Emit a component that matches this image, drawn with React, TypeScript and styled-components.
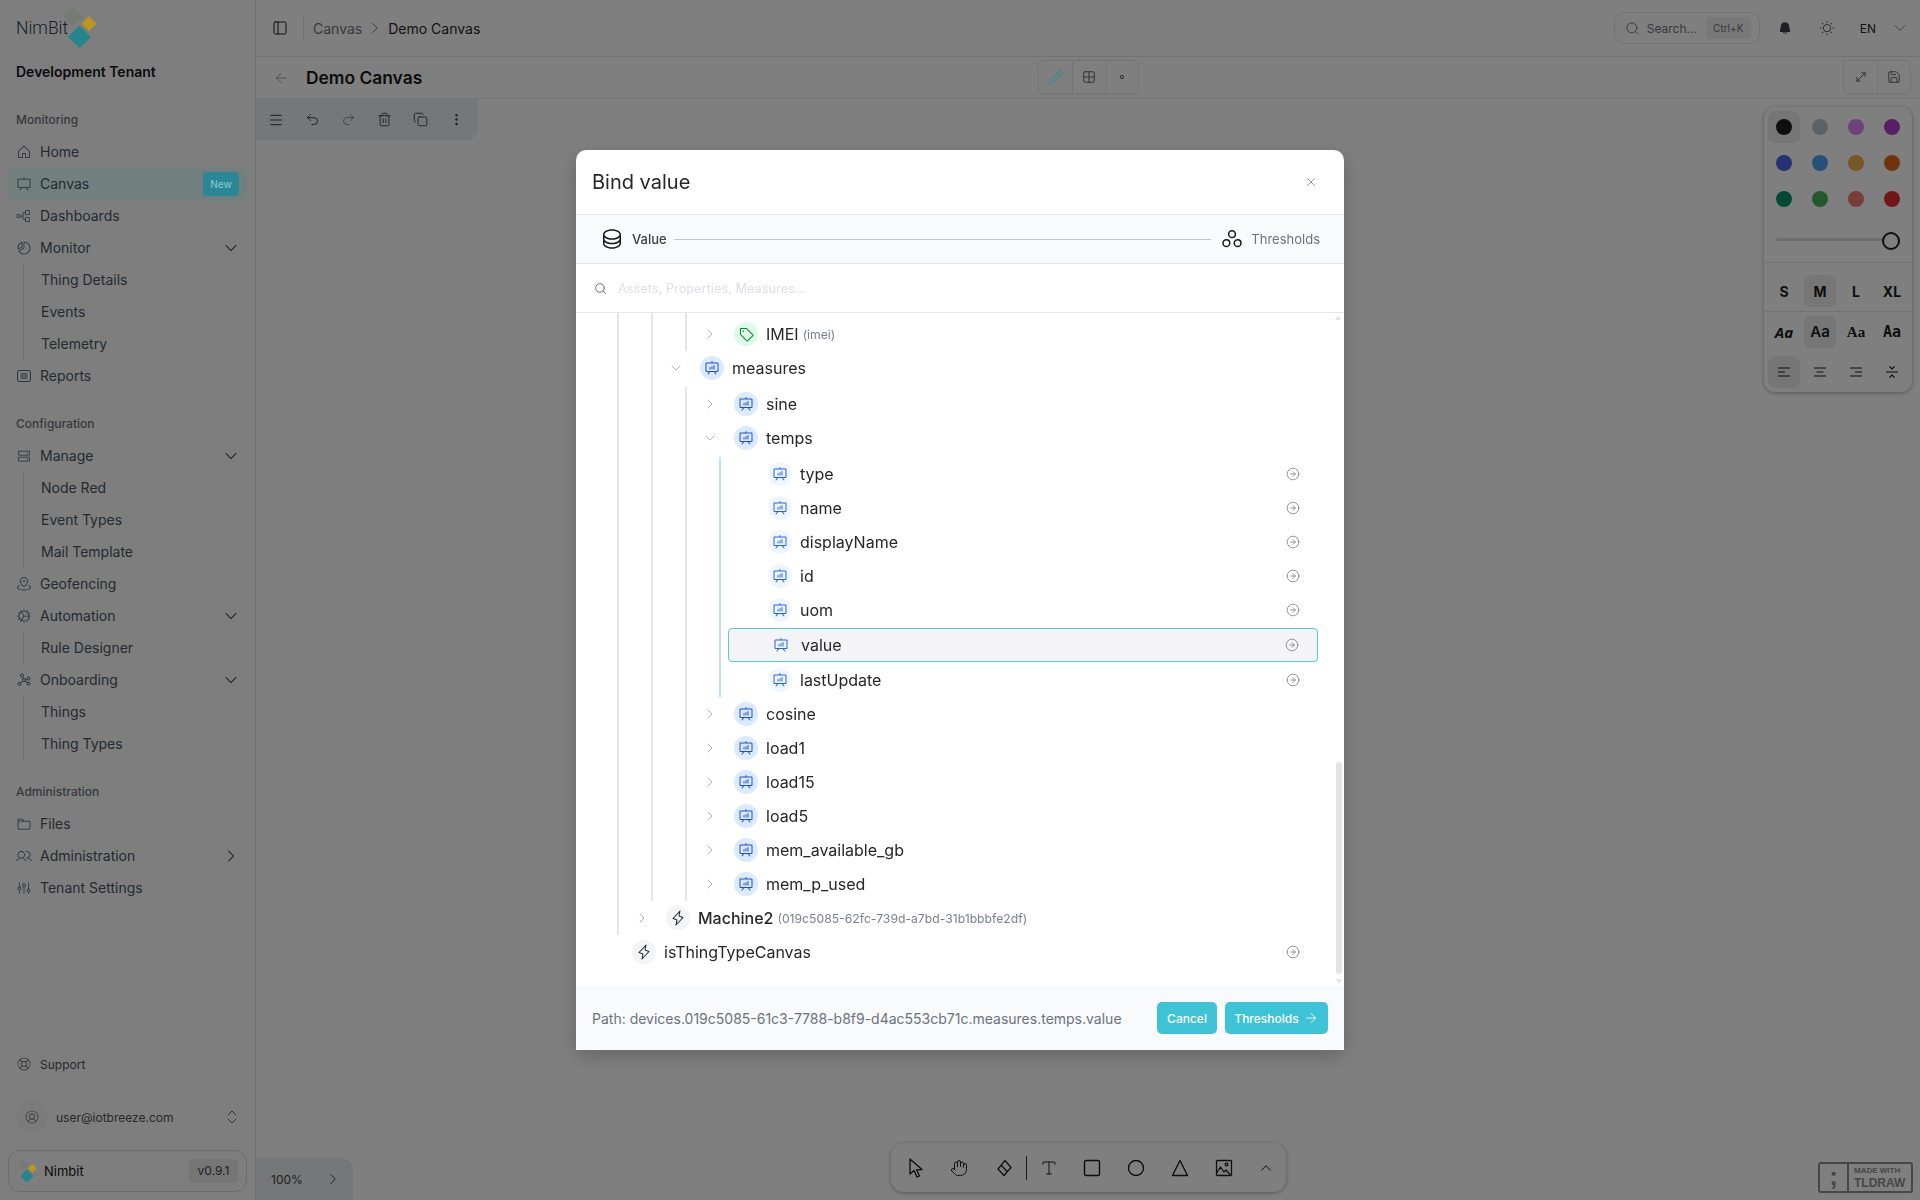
import React from "react";
import styled, { createGlobalStyle } from "styled-components";
import {
  ArrowLeft, ArrowRight, ChevronDown, ChevronRight, ChevronUp, ChevronsUpDown, CircleArrowRight,
  Copy, Grid2x2, Hand, Menu, MoveDiagonal, PanelLeft, Pencil, Redo2, Save, Search, Trash2, Type, Undo2, X, EllipsisVertical,
} from "lucide-react";
import {
  PiHouseLight, PiPresentationLight, PiTreeStructureLight, PiChartPieSliceLight, PiHardDrivesLight,
  PiMapPinAreaLight, PiGearFineLight, PiGraphLight, PiFolderLight, PiUsersLight, PiSlidersLight,
  PiLifebuoyLight, PiUserCircleLight, PiBellFill, PiSunLight, PiDatabase, PiCirclesThree,
  PiPresentationChart, PiTag, PiLightning,
} from "react-icons/pi";

const Global = createGlobalStyle`
  html, body { margin: 0; padding: 0; background: #fff; }
  * { box-sizing: border-box; }
  body { font-family: Inter, "Liberation Sans", sans-serif; color: #18181b; overflow: hidden; }
`;

const Shell = styled.div`display: grid; grid-template-columns: 256px 1fr; width: 1920px; height: 1200px;`;

/* Sidebar */
const Sidebar = styled.aside`display: flex; flex-direction: column; height: 1200px; background: #fcfcfc; border-right: 1px solid #e4e4e7; padding-bottom: 8px;`;
const Logo = styled.div`display: flex; align-items: flex-start; height: 56px; padding: 8px 0 0 16px;`;
const LogoText = styled.span`width: 48px; font: 300 17.500px/40px Roboto, sans-serif; color: #2c3e55;`;
const Tenant = styled.div`height: 32px; padding-left: 16px; font-size: 14px; line-height: 32px; font-weight: 600; color: #18181b;`;
const NavGroup = styled.nav`display: flex; flex-direction: column; margin-top: 16px; padding: 0 8px;`;
const NavLabel = styled.div`height: 32px; padding-left: 8px; font-size: 12px; line-height: 32px; font-weight: 500; color: #71717a;`;
const NavRow = styled.div<{ $active?: boolean }>`
  display: flex; align-items: center; gap: 8px; height: 32px; padding: 0 8px; border-radius: 8px;
  font-size: 14px; line-height: 16px; color: #4b5563; background: ${p => (p.$active ? "#e2ffff" : "transparent")};
  svg { flex: none; }
`;
const NavText = styled.span`flex: 1; padding-bottom: 1px;`;
const NavCaret = styled.span`display: flex; margin-right: -2px; color: #27272a;`;
const NewBadge = styled.span`position: relative; z-index: 1; width: 36px; height: 24px; border-radius: 4px; background: #2a8796; color: #7cc4ce; font-size: 10px; font-weight: 500; line-height: 24px; text-align: center;`;
const SubNav = styled.div`display: flex; flex-direction: column; margin-left: 15px; border-left: 1px solid #e4e4e7;`;
const SubRow = styled.div`height: 32px; padding-left: 17px; font-size: 14px; line-height: 32px; color: #4b5563;`;
const Support = styled.div`display: flex; align-items: center; gap: 8px; margin-top: auto; height: 32px; padding: 0 16px; font-size: 12px; line-height: 15px; color: #52525b;`;
const UserRow = styled.div`display: flex; align-items: center; gap: 8px; height: 32px; margin-top: 21px; padding: 0 14px 0 16px; font-size: 12px; color: #52525b;`;
const UserEmail = styled.span`flex: 1;`;
const Avatar = styled.span`display: flex; align-items: center; justify-content: center; width: 32px; height: 32px; border-radius: 50%; background: #f7f7f8; color: #71717a;`;
const Card = styled.div`display: flex; align-items: center; height: 42px; margin: 17px 8px 0; padding: 0 8px 0 9px; border: 1px solid #d8d8dc; border-radius: 12px;`;
const CardName = styled.span`flex: 1; margin-left: 7px; font-size: 13px; color: #18181b;`;
const Version = styled.span`display: block; width: 49px; height: 24px; border-radius: 4px; background: #ededee; font-size: 12px; line-height: 24px; text-align: center; color: #3f3f46;`;
const MarkSvg = styled.svg`position: relative; z-index: 1; flex: none;`;

/* Main */
const Main = styled.main`display: flex; flex-direction: column; min-width: 0;`;
const TopBar = styled.header`display: flex; align-items: center; height: 57px; padding: 0 10px 0 16px; border-bottom: 1px solid #e4e4e7;`;
const Divider = styled.span`width: 1px; height: 24px; margin: 0 9px 0 15px; background: #e4e4e7;`;
const Crumb = styled.span<{ $muted?: boolean }>`font-size: 14px; color: ${p => (p.$muted ? "#71717a" : "#27272a")};`;
const TopRight = styled.div`display: flex; align-items: center; margin-left: auto;`;
const SearchBox = styled.div`display: flex; align-items: center; width: 146px; height: 32px; padding: 0 8px 0 10px; border: 1px solid #e4e4e7; border-radius: 10px; font-size: 12px; color: #71717a;`;
const SearchText = styled.span`margin-left: 7px; flex: 1;`;
const Kbd = styled.span`display: block; width: 45px; height: 22px; border-radius: 5px; background: #f1f1f3; font-size: 10px; line-height: 22px; text-align: center; color: #71717a;`;
const TopIcon = styled.span<{ $w: number }>`display: flex; justify-content: center; width: ${p => p.$w}px; color: #3f3f46;`;
const CrumbSep = styled(TopIcon)`color: #71717a;`;
const Lang = styled.span`margin: 0 14px 0 16px; font-size: 12px; color: #27272a;`;

const SubBar = styled.div`display: grid; grid-template-columns: 1fr auto 1fr; align-items: center; height: 42px; padding: 0 9px; border-bottom: 1px solid #e8e8ea;`;
const TitleWrap = styled.div`display: flex; align-items: center; gap: 17px; padding-left: 8px; color: #a1a1aa;`;
const PageTitle = styled.h1`margin: 0; font-size: 17.400px; font-weight: 600; color: #18181b;`;
const Segments = styled.div`display: flex; justify-self: center; height: 34px; margin-top: -1px; border: 1px solid #e8e8ea; border-radius: 6px; box-shadow: 0 1px 2px #0000000f;`;
const SegmentsRight = styled(Segments)`justify-self: end;`;
const Segment = styled.span`
  display: flex; align-items: center; justify-content: center; width: 33px; color: #52525b;
  & + & { border-left: 1px solid #e8e8ea; }
`;
const AccentPencil = styled(Pencil)`position: relative; z-index: 1; color: #2b8a99;`;

const Canvas = styled.div`position: relative; flex: 1; overflow: hidden;`;
const TopTools = styled.div`position: absolute; left: 0; top: 0; display: flex; width: 222px; height: 41px; padding-left: 2px; background: #edeef1; border-bottom-right-radius: 12px;`;
const ToolBtn = styled.span<{ $off?: boolean }>`display: flex; align-items: center; justify-content: center; width: 36px; color: ${p => (p.$off ? "#8a8a92" : "#3f3f46")};`;
const StylePanel = styled.div`position: absolute; right: 8px; top: 8px; display: flex; flex-direction: column; width: 148px; height: 285px; padding: 4px 0; background: #fff; border-radius: 11px; box-shadow: 0 1px 4px #00000055;`;
const CellGrid = styled.div`display: grid; grid-template-columns: repeat(4, 32px); gap: 4px; padding: 0 4px;`;
const Cell = styled.span<{ $on?: boolean }>`display: flex; align-items: center; justify-content: center; height: 32px; border-radius: 7px; background: ${p => (p.$on ? "#ececec" : "transparent")}; color: #1d1d1d;`;
const Dot = styled.i<{ $c: string }>`display: block; width: 16px; height: 16px; border-radius: 50%; background: ${p => p.$c};`;
const SliderRow = styled.div`position: relative; display: flex; align-items: center; height: 48px; padding: 2px 16px 0 12px; border-bottom: 1px solid #e6e6e6;`;
const SliderTrack = styled.div`flex: 1; height: 3px; border-radius: 2px; background: #dcdcdc;`;
const SliderKnob = styled.span`position: absolute; right: 12px; top: 17px; width: 18px; height: 18px; border-radius: 50%; border: 2.500px solid #1d1d1d; background: #fff;`;
const SizeGrid = styled(CellGrid)`padding-top: 12px; padding-bottom: 4px; border-bottom: 1px solid #e6e6e6;`;
const FontGrid = styled(CellGrid)`padding-top: 4px; padding-bottom: 8px;`;
const SizeText = styled.span`font-size: 14px; font-weight: 700;`;
const FontText = styled.span<{ $f: string; $i?: boolean; $w?: number }>`font: ${p => (p.$i ? "italic " : "")}${p => p.$w ?? 600} 15px/20px ${p => p.$f};`;

const BottomTools = styled.div`position: absolute; left: 635px; bottom: 8px; display: flex; align-items: center; width: 395px; height: 49px; padding: 0 0 0 2px; background: #fff; border-radius: 13px; box-shadow: 0 1px 4px #00000055;`;
const Tool = styled.span<{ $w?: number }>`display: flex; align-items: center; justify-content: center; flex: none; width: ${p => p.$w ?? 44}px; color: #1d1d1d;`;
const ToolSep = styled.span`flex: none; width: 1px; height: 24px; background: #333;`;
const ZoomBox = styled.div`position: absolute; left: 0; bottom: 0; display: flex; align-items: center; justify-content: space-between; width: 97px; height: 42px; padding: 0 11px 0 15px; background: #edeef1; border-top-right-radius: 12px; font-size: 12px; color: #3f3f46;`;
const Mark = styled.div`position: absolute; right: 7px; bottom: 7px; display: flex; width: 95px; height: 31px; border: 2px solid #8e8e8e; border-radius: 3px; color: #8e8e8e;`;
const MarkSemi = styled.span`flex: none; width: 29px; border-right: 2px solid #8e8e8e; font: 700 26px/24px "Liberation Sans", sans-serif; text-align: center;`;
const MarkText = styled.span`display: flex; flex-direction: column; padding: 2px 0 0 5px; font-weight: 700; font-family: "Liberation Sans", sans-serif;`;
const MarkSmall = styled.span`font-size: 8px; line-height: 10px; white-space: nowrap;`;
const MarkBig = styled.span`font-size: 12px; line-height: 14px;`;

/* Dialog */
const Overlay = styled.div`position: fixed; inset: 0; display: flex; align-items: center; justify-content: center; background: rgba(0, 0, 0, 0.5);`;
const Dialog = styled.section`position: relative; z-index: 2; display: flex; flex-direction: column; width: 768px; height: 900px; background: #fff; border-radius: 10px 10px 0 0; box-shadow: 0 6px 20px #00000033; overflow: hidden;`;
const DialogHead = styled.div`display: flex; align-items: center; justify-content: space-between; flex: none; height: 65px; padding: 0 26px 0 16px; border-bottom: 1px solid #e5e7eb; color: #71717a;`;
const DialogTitle = styled.h2`margin: 0; font-size: 20px; font-weight: 400; color: #27272a;`;
const Stepper = styled.div`display: flex; align-items: center; flex: none; height: 49px; padding: 0 24px; background: #f9fafb; border-bottom: 1px solid #e5e7eb; font-size: 13px; color: #18181b;`;
const StepText = styled.span<{ $muted?: boolean }>`font-weight: ${p => (p.$muted ? 400 : 500)}; color: ${p => (p.$muted ? "#71717a" : "#3f3f46")}; margin-left: ${p => (p.$muted ? 7 : 8)}px;`;
const StepLine = styled.span`flex: 1; height: 1px; margin: 0 9px 0 7px; background: #c4c4cc;`;
const SearchRow = styled.div`display: flex; align-items: center; gap: 11px; flex: none; height: 49px; padding-left: 18px; border-bottom: 1px solid #e5e7eb; color: #52525b; font-size: 12.800px;`;
const Placeholder = styled.span`color: #dcdfe4;`;
const Tree = styled.div`flex: 1; min-height: 0; padding: 0 26px 0 16px; overflow: hidden;`;
const Group = styled.div<{ $blue?: boolean; $top?: number; $pad?: number }>`
  margin: ${p => p.$top ?? 0}px 0 0 25px; padding: ${p => p.$pad ?? 0}px 0 0 7px;
  border-left: 2px solid ${p => (p.$blue ? "#bfdbfe" : "#e4e4ec")};
`;
const Row = styled.div<{ $sel?: boolean }>`
  display: flex; align-items: center; height: 34px; padding: 0 18px 0 8px;
  ${p => p.$sel && "margin: 1px 0; background: #f3f4f6; border: 1px solid #58c9da; border-radius: 4px;"}
`;
const Caret = styled.span`display: flex; justify-content: center; flex: none; width: 16px; margin-right: 16px; color: #9ca3af;`;
const IconDot = styled.span<{ $bg: string; $fg: string }>`display: flex; align-items: center; justify-content: center; flex: none; width: 24px; height: 24px; margin-right: 8px; border-radius: 50%; background: ${p => p.$bg}; color: ${p => p.$fg};`;
const RowName = styled.span<{ $med?: boolean }>`font-size: 16px; font-weight: ${p => (p.$med ? 500 : 400)}; color: #27272a;`;
const RowHint = styled.span`margin-left: 4px; font-size: 12.200px; color: #7b8090;`;
const RowGo = styled.span`display: flex; margin-left: auto; color: #71717a;`;
const ScrollUp = styled.i`position: absolute; right: 3px; top: 165px; width: 0; height: 0; border: 3.500px solid transparent; border-top: 0; border-bottom: 5px solid #e4e4e7;`;
const ScrollDown = styled.i`position: absolute; right: 2px; top: 829px; width: 0; height: 0; border: 3.500px solid transparent; border-bottom: 0; border-top: 5px solid #e4e4e7;`;
const ScrollThumb = styled.i`position: absolute; right: 2px; top: 612px; width: 6px; height: 212px; border-radius: 3px; background: #e4e4e7;`;
const DialogFoot = styled.footer`display: flex; align-items: center; flex: none; height: 64px; padding: 0 16px; background: #f9fafb;`;
const PathText = styled.span`flex: 1; font-size: 14px; color: #6b7280;`;
const Button = styled.button<{ $w: number }>`display: flex; align-items: center; justify-content: center; gap: 4px; width: ${p => p.$w}px; height: 32px; margin-left: 8px; padding: 0; border: 0; border-radius: 5px; background: #3ec2d6; color: #fff; font: 500 12px Inter, sans-serif;`;

const LogoMark = ({ w, h }: { w: number; h: number }) => (
  <MarkSvg width={w} height={h} viewBox="0 0 33 40">
    <polygon points="9.500,0 19,9 9.500,18.500 0,9" fill="#757a75" />
    <polygon points="25,8 32.500,15.500 25,23 17.500,15.500" fill="#be961e" />
    <polygon points="15.500,17.500 27,29 15.500,40 4,29" fill="#24858c" />
  </MarkSvg>
);

const ReportsIcon = () => (
  <svg width="16" height="16" viewBox="0 0 16 16" fill="none" stroke="currentColor" strokeWidth=".9">
    <rect x="1.500" y="2.500" width="13" height="11" rx="1.500" />
    <rect x="4.500" y="5" width="7" height="6" fill="currentColor" stroke="none" opacity=".45" />
  </svg>
);

const Down = () => <NavCaret><ChevronDown size={20} strokeWidth={1.25} /></NavCaret>;

const nav1 = (
  <>
    <NavLabel>Monitoring</NavLabel>
    <NavRow><PiHouseLight size={16} /><NavText>Home</NavText></NavRow>
    <NavRow $active><PiPresentationLight size={16} /><NavText>Canvas</NavText><NewBadge>New</NewBadge></NavRow>
    <NavRow><PiTreeStructureLight size={16} /><NavText>Dashboards</NavText></NavRow>
    <NavRow><PiChartPieSliceLight size={16} /><NavText>Monitor</NavText><Down /></NavRow>
    <SubNav><SubRow>Thing Details</SubRow><SubRow>Events</SubRow><SubRow>Telemetry</SubRow></SubNav>
    <NavRow><ReportsIcon /><NavText>Reports</NavText></NavRow>
  </>
);
const nav2 = (
  <>
    <NavLabel>Configuration</NavLabel>
    <NavRow><PiHardDrivesLight size={16} /><NavText>Manage</NavText><Down /></NavRow>
    <SubNav><SubRow>Node Red</SubRow><SubRow>Event Types</SubRow><SubRow>Mail Template</SubRow></SubNav>
    <NavRow><PiMapPinAreaLight size={16} /><NavText>Geofencing</NavText></NavRow>
    <NavRow><PiGearFineLight size={16} /><NavText>Automation</NavText><Down /></NavRow>
    <SubNav><SubRow>Rule Designer</SubRow></SubNav>
    <NavRow><PiGraphLight size={16} /><NavText>Onboarding</NavText><Down /></NavRow>
    <SubNav><SubRow>Things</SubRow><SubRow>Thing Types</SubRow></SubNav>
  </>
);
const nav3 = (
  <>
    <NavLabel>Administration</NavLabel>
    <NavRow><PiFolderLight size={16} /><NavText>Files</NavText></NavRow>
    <NavRow><PiUsersLight size={16} /><NavText>Administration</NavText><NavCaret><ChevronRight size={20} strokeWidth={1.25} /></NavCaret></NavRow>
    <NavRow><PiSlidersLight size={16} /><NavText>Tenant Settings</NavText></NavRow>
  </>
);

const swatches = ["#1d1d1d", "#b9c2cb", "#e085f4", "#ae3ec9", "#4465e9", "#4ba1f1", "#f1ac4b", "#e16919", "#099268", "#4cb05e", "#f87777", "#e03131"];

const AlignIcon = ({ d }: { d: string }) => (
  <svg width="16" height="16" viewBox="0 0 16 16" fill="none" stroke="currentColor" strokeWidth="1.1"><path d={d} /></svg>
);

type Kind = "measure" | "field" | "tag" | "zap";
const kinds: Record<Kind, { bg: string; fg: string; icon: React.ReactNode }> = {
  measure: { bg: "#dbeafe", fg: "#1d4ed8", icon: <PiPresentationChart size={16} /> },
  field: { bg: "#eff6ff", fg: "#2563eb", icon: <PiPresentationChart size={16} /> },
  tag: { bg: "#dcfce7", fg: "#15803d", icon: <PiTag size={16} /> },
  zap: { bg: "#f3f4f6", fg: "#1f2937", icon: <PiLightning size={16} /> },
};

const TreeRow = ({ name, kind, caret, hint, go, sel, med }: { name: string; kind: Kind; caret?: "r" | "d"; hint?: string; go?: boolean; sel?: boolean; med?: boolean }) => (
  <Row $sel={sel}>
    <Caret>
      {caret === "r" && <ChevronRight size={18} strokeWidth={1.25} />}
      {caret === "d" && <ChevronDown size={18} strokeWidth={1.25} />}
    </Caret>
    <IconDot $bg={sel ? "#f3f4f6" : kinds[kind].bg} $fg={kinds[kind].fg}>{kinds[kind].icon}</IconDot>
    <RowName $med={med}>{name}</RowName>
    {hint && <RowHint>{hint}</RowHint>}
    {go && <RowGo><CircleArrowRight size={14} strokeWidth={1.25} /></RowGo>}
  </Row>
);

export default function App() {
  return (
    <>
      <Global />
      <Shell>
        <Sidebar>
          <Logo><LogoText>NimBit</LogoText><LogoMark w={33} h={40} /></Logo>
          <Tenant>Development Tenant</Tenant>
          <NavGroup>{nav1}</NavGroup>
          <NavGroup>{nav2}</NavGroup>
          <NavGroup>{nav3}</NavGroup>
          <Support><PiLifebuoyLight size={16} />Support</Support>
          <UserRow>
            <Avatar><PiUserCircleLight size={16} /></Avatar>
            <UserEmail>user@iotbreeze.com</UserEmail>
            <ChevronsUpDown size={18} strokeWidth={1.25} />
          </UserRow>
          <Card>
            <LogoMark w={19} h={24} />
            <CardName>Nimbit</CardName>
            <Version>v0.9.1</Version>
          </Card>
        </Sidebar>
        <Main>
          <TopBar>
            <PanelLeft size={16} strokeWidth={1.5} />
            <Divider />
            <Crumb $muted>Canvas</Crumb>
            <CrumbSep $w={26}><ChevronRight size={18} strokeWidth={1.25} /></CrumbSep>
            <Crumb>Demo Canvas</Crumb>
            <TopRight>
              <SearchBox>
                <Search size={15} strokeWidth={1.5} />
                <SearchText>Search...</SearchText>
                <Kbd>Ctrl+K</Kbd>
              </SearchBox>
              <TopIcon $w={50}><PiBellFill size={14} /></TopIcon>
              <TopIcon $w={34}><PiSunLight size={16} /></TopIcon>
              <Lang>EN</Lang>
              <ChevronDown size={20} strokeWidth={1} color="#71717a" />
            </TopRight>
          </TopBar>
          <SubBar>
            <TitleWrap><ArrowLeft size={16} strokeWidth={1.5} /><PageTitle>Demo Canvas</PageTitle></TitleWrap>
            <Segments>
              <Segment><AccentPencil size={15} strokeWidth={1.5} /></Segment>
              <Segment><Grid2x2 size={14} strokeWidth={1.5} /></Segment>
              <Segment><svg width="6" height="6" viewBox="0 0 6 6"><circle cx="3" cy="3" r="1.600" fill="none" stroke="currentColor" /></svg></Segment>
            </Segments>
            <SegmentsRight>
              <Segment><MoveDiagonal size={14} strokeWidth={1.5} /></Segment>
              <Segment><Save size={14} strokeWidth={1.5} /></Segment>
            </SegmentsRight>
          </SubBar>
          <Canvas>
            <TopTools>
              <ToolBtn><Menu size={16} strokeWidth={1.5} /></ToolBtn>
              <ToolBtn><Undo2 size={15} strokeWidth={1.5} /></ToolBtn>
              <ToolBtn $off><Redo2 size={15} strokeWidth={1.5} /></ToolBtn>
              <ToolBtn><Trash2 size={15} strokeWidth={1.5} /></ToolBtn>
              <ToolBtn><Copy size={15} strokeWidth={1.5} /></ToolBtn>
              <ToolBtn><EllipsisVertical size={15} strokeWidth={2} /></ToolBtn>
            </TopTools>
            <StylePanel>
              <CellGrid>
                {swatches.map((c, i) => <Cell key={c} $on={i === 0}><Dot $c={c} /></Cell>)}
              </CellGrid>
              <SliderRow><SliderTrack /><SliderKnob /></SliderRow>
              <SizeGrid>
                {["S", "M", "L", "XL"].map(s => <Cell key={s} $on={s === "M"}><SizeText>{s}</SizeText></Cell>)}
              </SizeGrid>
              <FontGrid>
                <Cell><FontText $f="'Noto Sans', sans-serif" $i $w={700}>Aa</FontText></Cell>
                <Cell $on><FontText $f="Inter, sans-serif">Aa</FontText></Cell>
                <Cell><FontText $f="'Liberation Serif', serif">Aa</FontText></Cell>
                <Cell><FontText $f="'DejaVu Sans Mono', monospace" $w={700}>Aa</FontText></Cell>
              </FontGrid>
              <CellGrid>
                <Cell $on><AlignIcon d="M2 4h12M2 8h7M2 12h12" /></Cell>
                <Cell><AlignIcon d="M2 4h12M4.500 8h7M2 12h12" /></Cell>
                <Cell><AlignIcon d="M2 4h12M7 8h7M2 12h12" /></Cell>
                <Cell><AlignIcon d="M2 8h12M5.500 2.500 8 5l2.500-2.500M5.500 13.500 8 11l2.500 2.500" /></Cell>
              </CellGrid>
            </StylePanel>
            <BottomTools>
              <Tool><svg width="18" height="22" viewBox="0 0 18 22" fill="none" stroke="currentColor" strokeWidth="1.3" strokeLinejoin="round"><path d="M4 2v15l4-3.500 3 6.500 2.500-1-3-6.200 5.500-.3z" /></svg></Tool>
              <Tool><Hand size={18} strokeWidth={1.3} /></Tool>
              <Tool $w={45}><svg width="18" height="20" viewBox="0 0 18 20" fill="none" stroke="currentColor" strokeWidth="1.2" strokeLinejoin="round"><path d="M10 2.500 16 9.500 9 17.500 3 11zM6 7l6.500 7" /></svg></Tool>
              <ToolSep />
              <Tool $w={43}><Type size={18} strokeWidth={1.3} /></Tool>
              <Tool><svg width="18" height="18" viewBox="0 0 18 18" fill="none" stroke="currentColor" strokeWidth="1.4"><rect x="1.500" y="1.500" width="15" height="15" rx="1.500" /></svg></Tool>
              <Tool><svg width="18" height="18" viewBox="0 0 18 18" fill="none" stroke="currentColor" strokeWidth="1.4"><circle cx="9" cy="9" r="7.500" /></svg></Tool>
              <Tool><svg width="18" height="18" viewBox="0 0 18 18" fill="none" stroke="currentColor" strokeWidth="1.4" strokeLinejoin="round"><path d="M9 1.500 16.500 16.500h-15z" /></svg></Tool>
              <Tool><svg width="18" height="18" viewBox="0 0 18 18" fill="none" stroke="currentColor" strokeWidth="1.3" strokeLinejoin="round"><rect x="1.500" y="1.500" width="15" height="15" rx="1" /><circle cx="11.500" cy="5.500" r="1.400" /><path d="M1.500 14l4-6 3.500 5 2-2 4.500 5" /></svg></Tool>
              <Tool $w={40}><ChevronUp size={18} strokeWidth={1.3} /></Tool>
            </BottomTools>
            <ZoomBox>100%<ChevronRight size={18} strokeWidth={1.25} /></ZoomBox>
            <Mark>
              <MarkSemi>;</MarkSemi>
              <MarkText><MarkSmall>MADE WITH</MarkSmall><MarkBig>TLDRAW</MarkBig></MarkText>
            </Mark>
          </Canvas>
        </Main>
      </Shell>
      <Overlay>
        <Dialog>
          <DialogHead><DialogTitle>Bind value</DialogTitle><X size={14} strokeWidth={1.25} /></DialogHead>
          <Stepper>
            <PiDatabase size={24} />
            <StepText>Value</StepText>
            <StepLine />
            <PiCirclesThree size={24} />
            <StepText $muted>Thresholds</StepText>
          </Stepper>
          <SearchRow><Search size={13} strokeWidth={1.5} /><Placeholder>Assets, Properties, Measures...</Placeholder></SearchRow>
          <Tree>
            <Group>
              <Group>
                <Group $pad={4}>
                  <TreeRow name="IMEI" kind="tag" caret="r" hint="(imei)" />
                </Group>
                <TreeRow name="measures" kind="measure" caret="d" />
                <Group $top={2}>
                  <TreeRow name="sine" kind="measure" caret="r" />
                  <TreeRow name="temps" kind="measure" caret="d" />
                  <Group $blue $top={2}>
                    <TreeRow name="type" kind="field" go />
                    <TreeRow name="name" kind="field" go />
                    <TreeRow name="displayName" kind="field" go />
                    <TreeRow name="id" kind="field" go />
                    <TreeRow name="uom" kind="field" go />
                    <TreeRow name="value" kind="field" go sel />
                    <TreeRow name="lastUpdate" kind="field" go />
                  </Group>
                  <TreeRow name="cosine" kind="measure" caret="r" />
                  <TreeRow name="load1" kind="measure" caret="r" />
                  <TreeRow name="load15" kind="measure" caret="r" />
                  <TreeRow name="load5" kind="measure" caret="r" />
                  <TreeRow name="mem_available_gb" kind="measure" caret="r" />
                  <TreeRow name="mem_p_used" kind="measure" caret="r" />
                </Group>
              </Group>
              <TreeRow name="Machine2" kind="zap" caret="r" hint="(019c5085-62fc-739d-a7bd-31b1bbbfe2df)" med />
            </Group>
            <TreeRow name="isThingTypeCanvas" kind="zap" go />
          </Tree>
          <DialogFoot>
            <PathText>Path: devices.019c5085-61c3-7788-b8f9-d4ac553cb71c.measures.temps.value</PathText>
            <Button $w={60}>Cancel</Button>
            <Button $w={103}>Thresholds <ArrowRight size={16} strokeWidth={1.25} /></Button>
          </DialogFoot>
          <ScrollThumb /><ScrollDown /><ScrollUp />
        </Dialog>
      </Overlay>
    </>
  );
}
